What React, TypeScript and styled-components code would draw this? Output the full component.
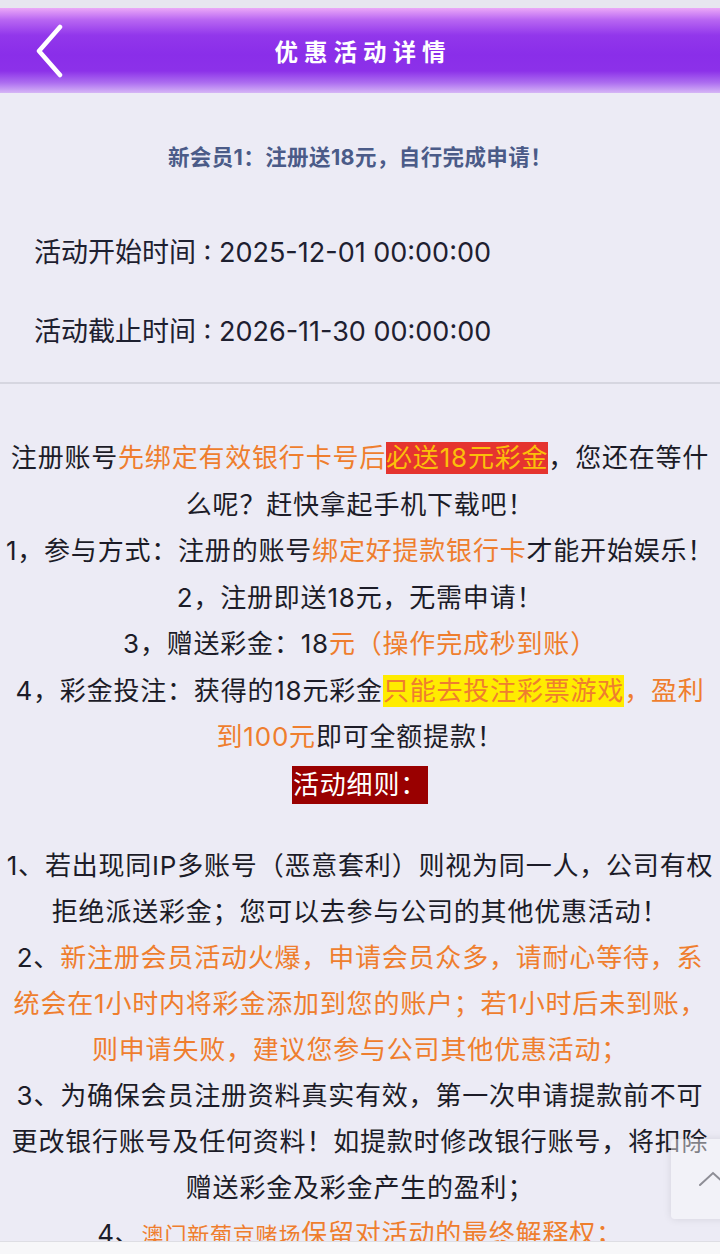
import React from 'react'
import styled, { createGlobalStyle } from 'styled-components'

const GlobalStyle = createGlobalStyle`
  html, body {
    margin: 0;
    padding: 0;
    background: #ecebf5;
    font-family: Inter, "Noto Sans CJK SC", sans-serif;
  }
`

const Screen = styled.div`
  position: relative;
  height: 100vh;
  display: flex;
  flex-direction: column;
  overflow: hidden;
  background: #ecebf5;
`

const StatusStrip = styled.div`
  height: 8px;
  flex-shrink: 0;
  background: #e7e6ef;
`

const NavBar = styled.header`
  height: 85px;
  flex-shrink: 0;
  display: grid;
  grid-template-columns: 90px 1fr 90px;
  align-items: center;
  background: linear-gradient(
    180deg,
    #eba8f8 0%,
    #b866f2 14%,
    #9237eb 32%,
    #8a2ee9 55%,
    #8c31e9 74%,
    #ad6ef0 88%,
    #d6b6f6 100%
  );
`

const BackButton = styled.button`
  width: 60px;
  height: 60px;
  margin-left: 20px;
  padding: 0;
  border: 0;
  background: transparent;
  display: flex;
  align-items: center;
  justify-content: center;
  cursor: pointer;
`

const Title = styled.h1`
  margin: 0;
  text-align: center;
  color: #fff;
  font-size: 23.5px;
  font-weight: 700;
  letter-spacing: 6px;
  padding-left: 6px;
`

const Body = styled.main`
  flex: 1;
  overflow: hidden;
`

const InfoSection = styled.section`
  padding: 50px 0 32px;
  border-bottom: 2px solid #d6d6e0;
`

const Subtitle = styled.h2`
  margin: 0;
  text-align: center;
  font-size: 21.5px;
  line-height: 28px;
  font-weight: 700;
  color: #4b5b88;
  letter-spacing: 0.4px;
`

const DateList = styled.div`
  margin-top: 64px;
  padding-left: 34px;
  display: flex;
  flex-direction: column;
  gap: 43px;
`

const DateRow = styled.div`
  font-size: 27px;
  line-height: 36px;
  color: #1e2030;
`

const Article = styled.article`
  padding-top: 51px;
  text-align: center;
  color: #1c1c28;
  font-size: 26px;
  letter-spacing: 0.8px;
`

const Para = styled.p<{ $lh?: number }>`
  margin: 0;
  white-space: nowrap;
  line-height: ${(p) => p.$lh ?? 46}px;
`

const Rules = styled.div`
  margin-top: 36px;
`

const Orange = styled.span<{ $small?: boolean }>`
  color: #ef7e2e;
  font-size: ${(p) => (p.$small ? '22px' : 'inherit')};
`

const Mark = styled.span<{ $bg: string; $fg: string }>`
  display: inline-block;
  line-height: 32px;
  background: ${(p) => p.$bg};
  color: ${(p) => p.$fg};
`

const RuleTag = styled.span`
  display: inline-block;
  line-height: 38px;
  padding: 0 1px;
  vertical-align: middle;
  background: #990000;
  color: #fff;
`

const ScrollTop = styled.button`
  position: absolute;
  right: -35px;
  bottom: 35px;
  width: 84px;
  height: 80px;
  padding: 0;
  border: 0;
  border-radius: 4px;
  background: rgba(250, 250, 253, 0.45);
  box-shadow: 0 0 8px rgba(0, 0, 0, 0.1);
  display: flex;
  align-items: center;
  justify-content: center;
`

const BottomBar = styled.footer`
  height: 12px;
  flex-shrink: 0;
  background: #f7f7f9;
  border-top: 1px solid #dedee4;
`

const Chevron = ({ dir }: { dir: 'left' | 'up' }) =>
  dir === 'left' ? (
    <svg width="30" height="54" viewBox="0 0 30 54">
      <path d="M25 3 L4 27 L25 51" fill="none" stroke="#fff" strokeWidth="4.5" strokeLinecap="round" strokeLinejoin="round" />
    </svg>
  ) : (
    <svg width="30" height="18" viewBox="0 0 30 18">
      <path d="M2 15 L15 3 L28 15" fill="none" stroke="#8e8e96" strokeWidth="2" strokeLinecap="round" />
    </svg>
  )

export default function App() {
  return (
    <>
      <GlobalStyle />
      <Screen>
        <StatusStrip />
        <NavBar>
          <BackButton aria-label="返回">
            <Chevron dir="left" />
          </BackButton>
          <Title>优惠活动详情</Title>
          <span />
        </NavBar>
        <Body>
          <InfoSection>
            <Subtitle>新会员1：注册送18元，自行完成申请！</Subtitle>
            <DateList>
              <DateRow>活动开始时间 : 2025-12-01 00:00:00</DateRow>
              <DateRow>活动截止时间 : 2026-11-30 00:00:00</DateRow>
            </DateList>
          </InfoSection>
          <Article>
            <Para $lh={46.5}>
              注册账号<Orange>先绑定有效银行卡号后</Orange>
              <Mark $bg="#e5342f" $fg="#fbbf0a">必送18元彩金</Mark>，您还在等什
              <br />
              么呢？赶快拿起手机下载吧！
            </Para>
            <Para $lh={46.5}>
              1，参与方式：注册的账号<Orange>绑定好提款银行卡</Orange>才能开始娱乐！
            </Para>
            <Para $lh={46.5}>2，注册即送18元，无需申请！</Para>
            <Para $lh={46.5}>
              3，赠送彩金：18<Orange>元（操作完成秒到账）</Orange>
            </Para>
            <Para $lh={46.5}>
              4，彩金投注：获得的18元彩金
              <Mark $bg="#ffec00" $fg="#ef7e2e">只能去投注彩票游戏</Mark>
              <Orange>，盈利</Orange>
              <br />
              <Orange>到100元</Orange>即可全额提款！
            </Para>
            <Para $lh={46.5}>
              <RuleTag>活动细则：</RuleTag>
            </Para>
            <Rules>
              <Para>
                1、若出现同IP多账号（恶意套利）则视为同一人，公司有权
                <br />
                拒绝派送彩金；您可以去参与公司的其他优惠活动！
              </Para>
              <Para>
                2、
                <Orange>
                  新注册会员活动火爆，申请会员众多，请耐心等待，系
                  <br />
                  统会在1小时内将彩金添加到您的账户；若1小时后未到账，
                  <br />
                  则申请失败，建议您参与公司其他优惠活动；
                </Orange>
              </Para>
              <Para>
                3、为确保会员注册资料真实有效，第一次申请提款前不可
                <br />
                更改银行账号及任何资料！如提款时修改银行账号，将扣除
                <br />
                赠送彩金及彩金产生的盈利；
              </Para>
              <Para>
                4、<Orange $small>澳门新葡京赌场</Orange>
                <Orange>保留对活动的最终解释权；</Orange>
              </Para>
            </Rules>
          </Article>
        </Body>
        <BottomBar />
        <ScrollTop aria-label="回到顶部">
          <Chevron dir="up" />
        </ScrollTop>
      </Screen>
    </>
  )
}
